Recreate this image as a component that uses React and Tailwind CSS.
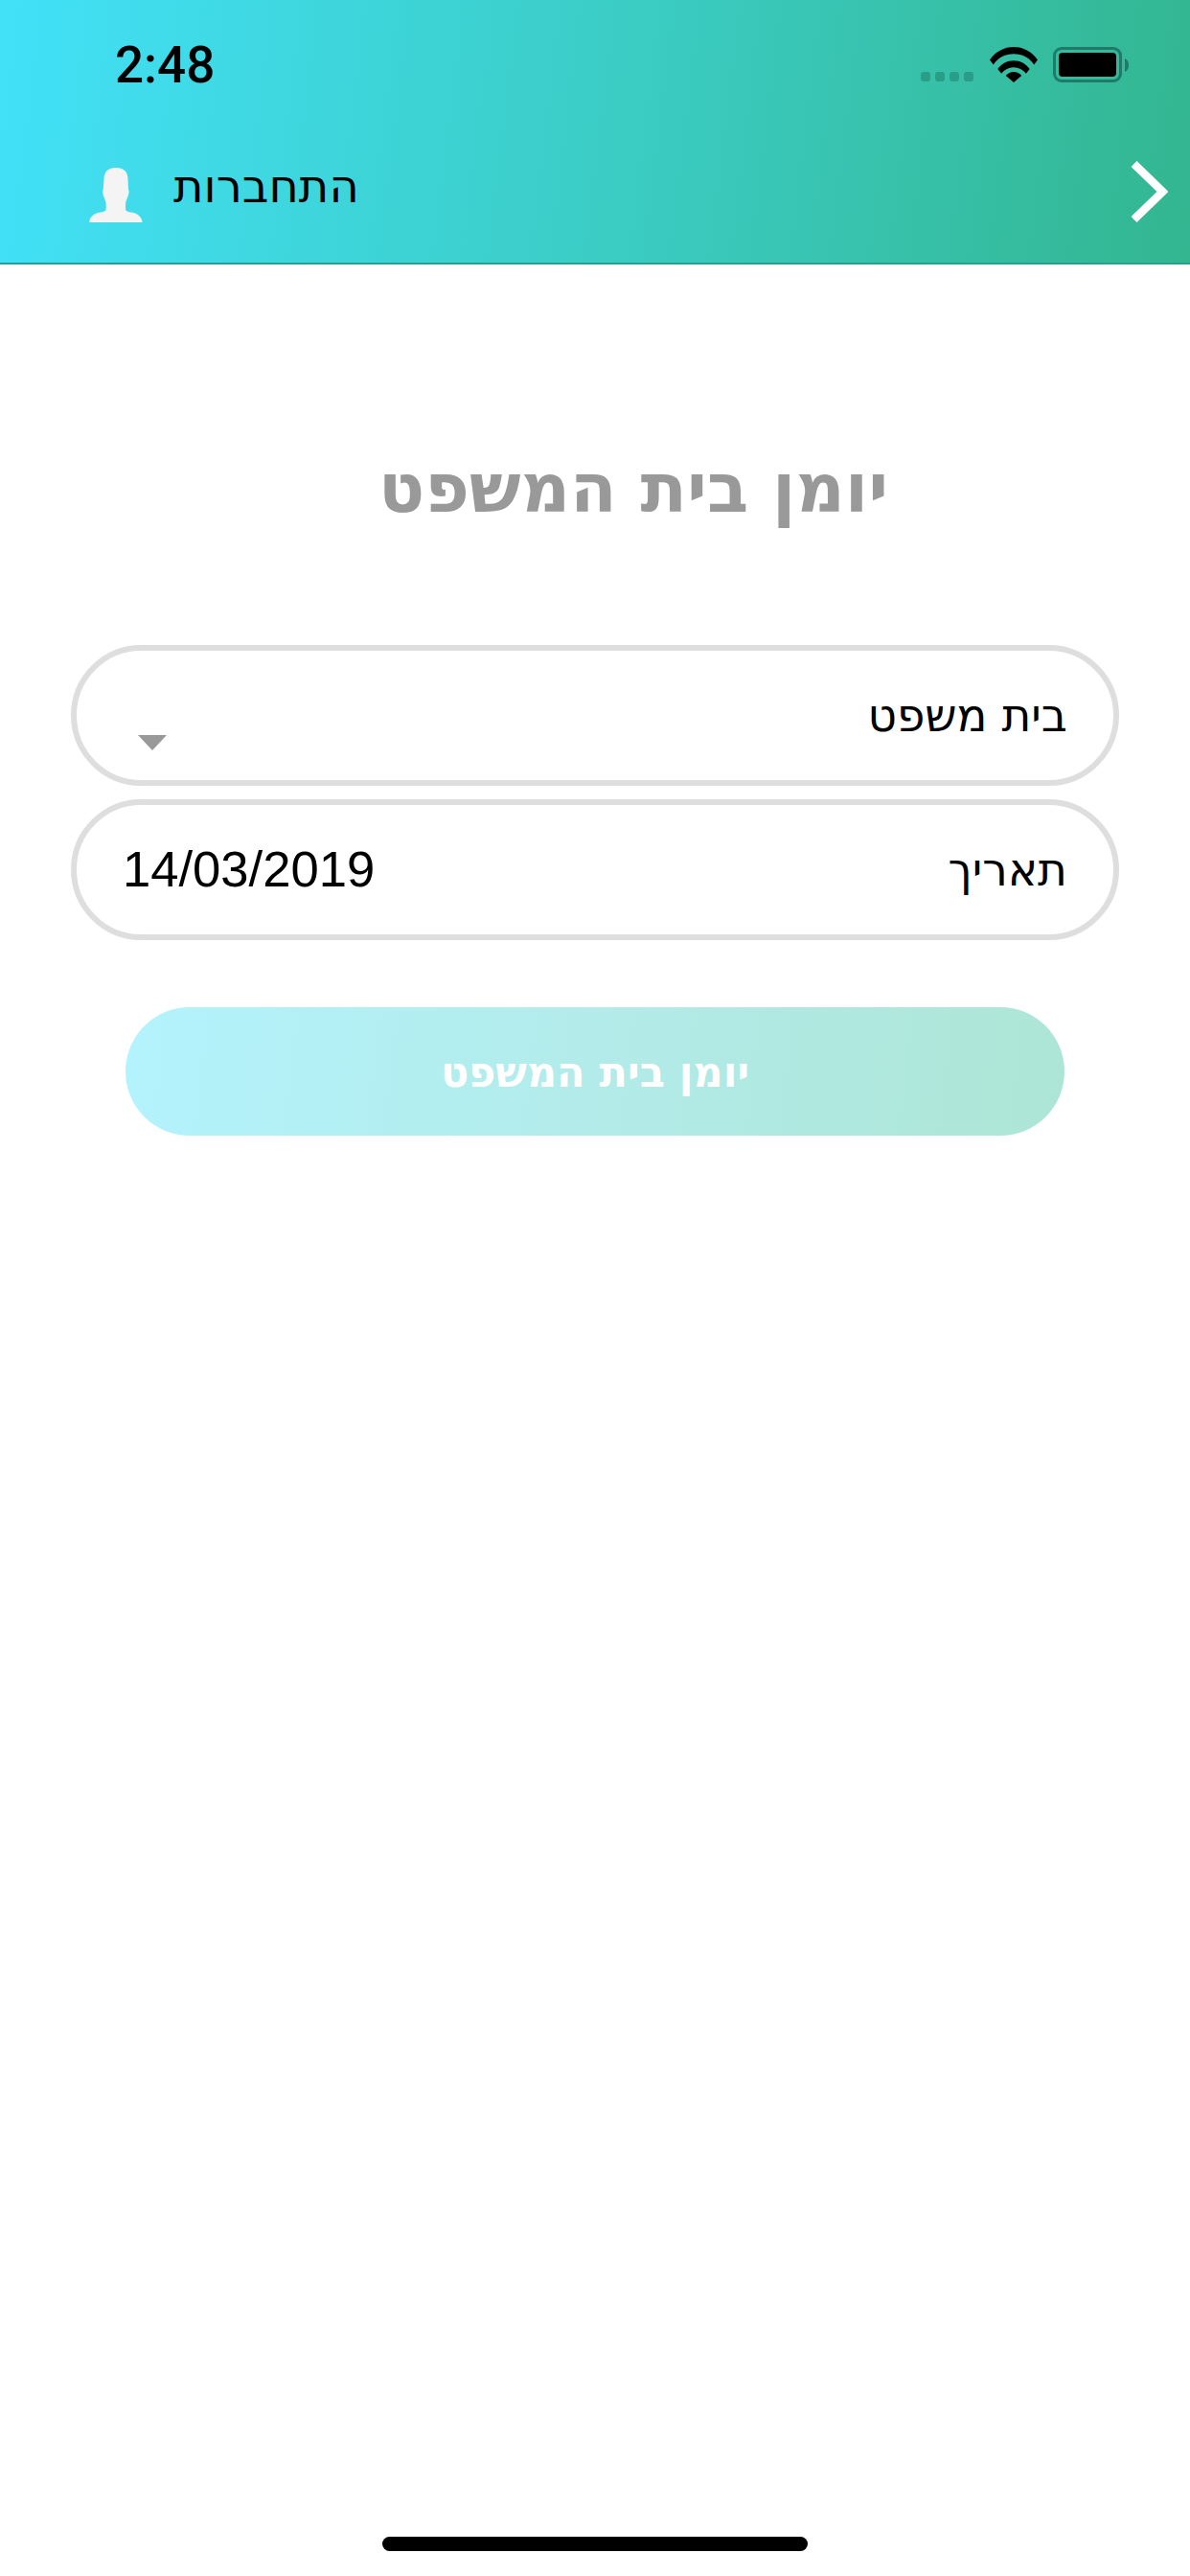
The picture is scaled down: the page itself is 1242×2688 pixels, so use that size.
import React from "react";

const hebrew = "font-['DejaVu_Sans',sans-serif]";

function Wifi() {
  return (
    <svg width="50" height="37" viewBox="0 0 50 37" fill="#000">
      <path d="M0 13.5C6.5 4.5 15 0 25 0s18.5 4.500 25 13.500l-3.800 5C41 11 33.800 7.300 25 7.300S9 11 3.800 18.500z" />
      <path d="M8.300 23C12.500 17.500 18 14.300 25 14.300S37.500 17.500 41.700 23l-3.800 4.800C34.500 23.500 30.300 21.300 25 21.300s-9.500 2.200-12.900 6.500z" />
      <path d="M16.800 30C19 27.300 21.700 26 25 26s6 1.300 8.200 4L25 37z" />
    </svg>
  );
}

function Battery() {
  return (
    <div className="flex items-center gap-[3px]">
      <div className="w-[72px] h-[37px] rounded-[9px] border-[3px] border-[#1f7a69] p-[3px]">
        <div className="w-full h-full rounded-[4px] bg-black" />
      </div>
      <svg width="4" height="14" viewBox="0 0 4 14" fill="#1f7a69">
        <path d="M0 0c2.500 1 4 3.500 4 7s-1.500 6-4 7z" />
      </svg>
    </div>
  );
}

function Person() {
  return (
    <svg width="56" height="57" viewBox="0 0 56 57" fill="#f4f4f4">
      <path d="M15.500 12C15.500 4 20 0 28 0s12.500 4 12.500 12l.5 11c1 1 .6 4-.2 6-.5 2-1.600 4-2.300 6-.5 2-.6 5-.3 9.500 2 1.500 5 2 8 2.500 5 1.200 9 4.800 9.500 10.500H0c.5-5.700 4.500-9.300 9.500-10.500 3-.5 6-1 8-2.500.3-4.500.2-7.500-.3-9.500-.7-2-1.800-4-2.300-6-.8-2-1.200-5-.2-6z" />
    </svg>
  );
}

function Chevron() {
  return (
    <svg width="39" height="64" viewBox="0 0 39 64" fill="none" stroke="#fff" strokeWidth="8.500">
      <path d="M3.500 3L33.500 32L3.500 61" strokeLinejoin="miter" />
    </svg>
  );
}

function Field({ children }) {
  return (
    <div className="h-[147px] rounded-full border-[6px] border-[#dedede] bg-white relative pl-[49px] pr-[48px] flex items-center justify-between">
      {children}
    </div>
  );
}

export default function App() {
  return (
    <div className="w-[1242px] h-[2688px] bg-white flex flex-col overflow-hidden">
      <header className="h-[276px] shrink-0 border-b-2 border-b-[#26a090] bg-[linear-gradient(97deg,#42e1f8_0%,#3bcdc6_50%,#33b690_100%)]">
        <div className="h-[144px] flex items-start pt-[44px] pl-[120px] pr-[64px]">
          <span className="font-['Roboto',sans-serif] font-medium text-[53px] leading-[48px] text-black">2:48</span>
          <div className="ml-auto flex items-end pt-[5px]">
            <div className="flex gap-[5px] mb-px mr-[17px]">
              <span className="w-[10px] h-[10px] rounded-[3px] bg-[#2a9d88]" />
              <span className="w-[10px] h-[10px] rounded-[3px] bg-[#2a9d88]" />
              <span className="w-[10px] h-[10px] rounded-[3px] bg-[#2a9d88]" />
              <span className="w-[10px] h-[10px] rounded-[3px] bg-[#2a9d88]" />
            </div>
            <Wifi />
            <div className="ml-[16px]">
              <Battery />
            </div>
          </div>
        </div>
        <div className="flex items-start pl-[93px] pr-[23px]">
          <div className="mt-[31px]">
            <Person />
          </div>
          <span dir="rtl" className={`${hebrew} ml-[32px] mt-[20px] text-[48px] leading-[60px] text-black`}>התחברות</span>
          <div className="ml-auto mt-[24px]">
            <Chevron />
          </div>
        </div>
      </header>

      <main className="flex flex-col pl-[74px] pr-[74px] pt-[190px]">
        <h1 dir="rtl" className={`${hebrew} text-center pl-[80px] text-[71px] leading-[88px] font-bold text-[#999999]`}>יומן בית המשפט</h1>
        <div className="mt-[119px] flex flex-col gap-[14px]">
          <Field>
            <span className="w-0 h-0 mt-[56px] ml-[15px] border-l-[15px] border-r-[15px] border-t-[16px] border-l-transparent border-r-transparent border-t-[#999999]" />
            <span dir="rtl" className={`${hebrew} text-[47px] leading-[60px] text-black`}>בית משפט</span>
          </Field>
          <Field>
            <span className="font-['Liberation_Sans',sans-serif] text-[52.6px] leading-[60px] text-black -ml-[1px] mb-[2px]">14/03/2019</span>
            <span dir="rtl" className={`${hebrew} text-[47px] leading-[60px] text-black`}>תאריך</span>
          </Field>
        </div>
        <button className={`${hebrew} mt-[70px] mx-[57px] h-[134px] pt-[2px] rounded-full text-white font-bold text-[43px] bg-[linear-gradient(97deg,#b3f3fd_0%,#b2ebe9_50%,#ade5d5_100%)]`}>
          <span dir="rtl">יומן בית המשפט</span>
        </button>
      </main>

      <div className="mt-auto mb-[26px] mx-auto w-[444px] h-[15px] rounded-full bg-black" />
    </div>
  );
}
